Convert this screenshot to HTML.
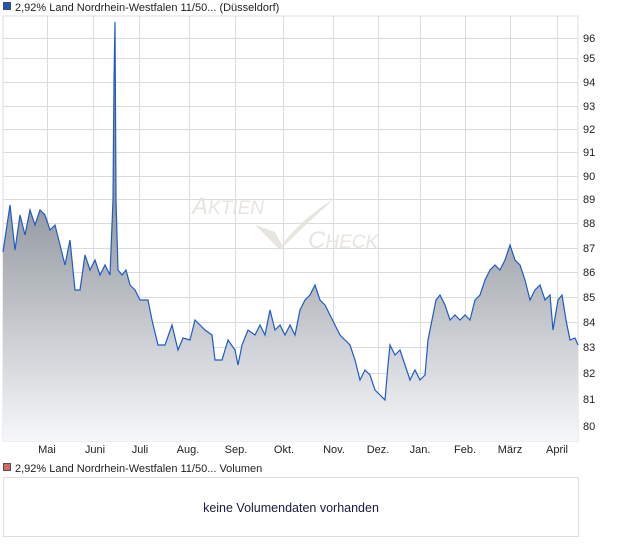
<!DOCTYPE html>
<html><head><meta charset="utf-8"><style>
body{margin:0;background:#fff;width:620px;height:546px;overflow:hidden;font-family:"Liberation Sans",sans-serif;}
</style></head><body>
<svg width="620" height="546" xmlns="http://www.w3.org/2000/svg" font-family="Liberation Sans, sans-serif">
<defs>
<linearGradient id="g" gradientUnits="userSpaceOnUse" x1="0" y1="210" x2="0" y2="441">
<stop offset="0" stop-color="#969ca3"/><stop offset="1" stop-color="#f6f7f9"/>
</linearGradient>
</defs>
<rect x="3" y="16" width="575" height="425" fill="#fff" stroke="#ddd"/>
<g stroke="#dcdcdc" stroke-width="1">
<line x1="47.5" y1="16" x2="47.5" y2="441"/><line x1="93.5" y1="16" x2="93.5" y2="441"/><line x1="139.5" y1="16" x2="139.5" y2="441"/><line x1="189.5" y1="16" x2="189.5" y2="441"/><line x1="235.5" y1="16" x2="235.5" y2="441"/><line x1="283.5" y1="16" x2="283.5" y2="441"/><line x1="333.5" y1="16" x2="333.5" y2="441"/><line x1="378.5" y1="16" x2="378.5" y2="441"/><line x1="420.5" y1="16" x2="420.5" y2="441"/><line x1="465.5" y1="16" x2="465.5" y2="441"/><line x1="510.5" y1="16" x2="510.5" y2="441"/><line x1="557.5" y1="16" x2="557.5" y2="441"/>
<line x1="3" y1="38.5" x2="578" y2="38.5"/><line x1="3" y1="58.5" x2="578" y2="58.5"/><line x1="3" y1="82.5" x2="578" y2="82.5"/><line x1="3" y1="106.5" x2="578" y2="106.5"/><line x1="3" y1="129.5" x2="578" y2="129.5"/><line x1="3" y1="152.5" x2="578" y2="152.5"/><line x1="3" y1="176.5" x2="578" y2="176.5"/><line x1="3" y1="199.5" x2="578" y2="199.5"/><line x1="3" y1="223.5" x2="578" y2="223.5"/><line x1="3" y1="248.5" x2="578" y2="248.5"/><line x1="3" y1="272.5" x2="578" y2="272.5"/><line x1="3" y1="297.5" x2="578" y2="297.5"/><line x1="3" y1="322.5" x2="578" y2="322.5"/><line x1="3" y1="347.5" x2="578" y2="347.5"/><line x1="3" y1="373.5" x2="578" y2="373.5"/><line x1="3" y1="399.5" x2="578" y2="399.5"/><line x1="3" y1="426.5" x2="578" y2="426.5"/>
</g>
<g fill="#e6e2dc" opacity="0.9">
<text x="192" y="214" font-size="24" font-style="italic">A<tspan font-size="19">KTIEN</tspan></text>
<text x="308" y="248" font-size="24" font-style="italic">C<tspan font-size="19">HECK</tspan></text>
<path d="M255 225 L275 232 L282 245 Q300 220 335 198 Q305 225 280 250 Z"/>
</g>
<polygon fill="url(#g)" points="3,441 3,252 10,205 15,250 20,215 25,235 30,210 35,225 40,210 45,215 50,230 55,225 60,245 65,265 70,240 75,290 80,290 85,255 90,270 95,260 100,275 105,265 110,275 113,200 114,80 115,22 116,200 118,270 122,275 126,270 130,285 135,290 140,300 148,300 152,320 158,345 165,345 172,325 178,350 183,338 190,340 195,320 200,325 205,330 212,335 215,360 222,360 228,340 235,350 238,365 242,345 248,330 255,335 260,325 265,335 270,310 275,330 280,325 285,335 290,325 295,335 300,310 305,300 310,295 315,285 320,300 325,305 330,315 335,325 340,335 345,340 350,345 355,360 360,380 365,370 370,375 375,390 380,395 385,400 388,365 390,345 395,355 400,350 405,365 410,380 415,370 420,380 425,375 428,340 432,320 436,300 440,295 445,305 450,320 455,315 460,320 465,315 470,320 475,300 480,295 485,280 490,270 495,265 500,270 505,260 510,245 515,260 520,265 525,280 530,300 535,290 540,285 545,300 550,295 553,330 558,300 562,295 566,320 570,340 575,338 578,345 578,441"/>
<polyline fill="none" stroke="#1f5bc6" stroke-width="1.2" points="3,252 10,205 15,250 20,215 25,235 30,210 35,225 40,210 45,215 50,230 55,225 60,245 65,265 70,240 75,290 80,290 85,255 90,270 95,260 100,275 105,265 110,275 113,200 114,80 115,22 116,200 118,270 122,275 126,270 130,285 135,290 140,300 148,300 152,320 158,345 165,345 172,325 178,350 183,338 190,340 195,320 200,325 205,330 212,335 215,360 222,360 228,340 235,350 238,365 242,345 248,330 255,335 260,325 265,335 270,310 275,330 280,325 285,335 290,325 295,335 300,310 305,300 310,295 315,285 320,300 325,305 330,315 335,325 340,335 345,340 350,345 355,360 360,380 365,370 370,375 375,390 380,395 385,400 388,365 390,345 395,355 400,350 405,365 410,380 415,370 420,380 425,375 428,340 432,320 436,300 440,295 445,305 450,320 455,315 460,320 465,315 470,320 475,300 480,295 485,280 490,270 495,265 500,270 505,260 510,245 515,260 520,265 525,280 530,300 535,290 540,285 545,300 550,295 553,330 558,300 562,295 566,320 570,340 575,338 578,345"/>
<g font-size="11" fill="#222">
<text x="583" y="42">96</text><text x="583" y="62">95</text><text x="583" y="86">94</text><text x="583" y="110">93</text><text x="583" y="133">92</text><text x="583" y="156">91</text><text x="583" y="180">90</text><text x="583" y="203">89</text><text x="583" y="227">88</text><text x="583" y="252">87</text><text x="583" y="276">86</text><text x="583" y="301">85</text><text x="583" y="326">84</text><text x="583" y="351">83</text><text x="583" y="377">82</text><text x="583" y="403">81</text><text x="583" y="430">80</text>
<g text-anchor="middle"><text x="47" y="453">Mai</text><text x="95" y="453">Juni</text><text x="140" y="453">Juli</text><text x="188" y="453">Aug.</text><text x="236" y="453">Sep.</text><text x="284" y="453">Okt.</text><text x="334" y="453">Nov.</text><text x="378" y="453">Dez.</text><text x="420" y="453">Jan.</text><text x="465" y="453">Feb.</text><text x="510" y="453">März</text><text x="557" y="453">April</text></g>
<text x="15" y="11">2,92% Land Nordrhein-Westfalen 11/50... (Düsseldorf)</text>
<text x="15" y="472">2,92% Land Nordrhein-Westfalen 11/50... Volumen</text>
</g>
<rect x="3.5" y="2.5" width="7" height="7" fill="#2255b8" stroke="#333" stroke-width="0.8"/>
<rect x="3.5" y="463.5" width="7" height="7" fill="#d06a66" stroke="#333" stroke-width="0.8"/>
<rect x="3.5" y="477.5" width="575" height="59" fill="#fff" stroke="#ddd"/>
<text x="291" y="512" font-size="12.5" fill="#1a1a40" text-anchor="middle">keine Volumendaten vorhanden</text>
</svg>
</body></html>
